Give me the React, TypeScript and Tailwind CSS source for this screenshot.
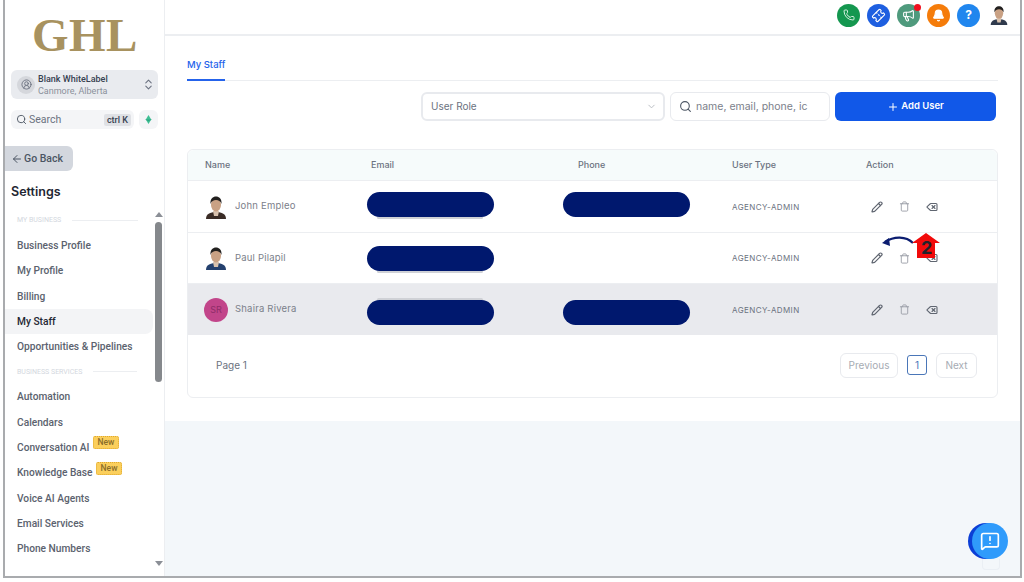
import { ArrowLeft, Bell, ChevronDown, ChevronsUpDown, CircleUserRound, Delete, Megaphone, MessageSquareWarning, Pencil, Phone, Plus, Search, Ticket, Trash } from "lucide-react";

const business = ["Business Profile", "My Profile", "Billing", "My Staff", "Opportunities & Pipelines"];
const services = [
  { name: "Automation" },
  { name: "Calendars" },
  { name: "Conversation AI", isNew: true },
  { name: "Knowledge Base", isNew: true },
  { name: "Voice AI Agents" },
  { name: "Email Services" },
  { name: "Phone Numbers" },
];

function Portrait({ shirt, size }: { shirt: string; size: string }) {
  return (
    <svg viewBox="0 0 24 24" className={size}>
      <path d="M2 24c0-5 4-7 10-7s10 2 10 7z" fill={shirt} />
      <path d="M9 16h6l-1 5h-4z" fill="#d9c2ae" />
      <ellipse cx="12" cy="10" rx="5" ry="6.5" fill="#c9a184" />
      <path d="M6.500 9C6 3.500 9 1.500 12 1.500S18 3.500 17.500 9c-1-3-3-4-5.500-4S7.500 6 6.500 9z" fill="#22201f" />
    </svg>
  );
}

function NavItem({ name, active, isNew }: { name: string; active?: boolean; isNew?: boolean }) {
  return (
    <div className={`flex h-[25.3px] w-[148px] items-center rounded-r-lg pl-[12px] text-[10.2px] font-medium ${active ? "bg-[#f3f4f6] text-[#1f2733]" : "text-[#5b626e]"}`}>
      <span className="whitespace-nowrap">{name}</span>
      {isNew && (
        <span className="mb-[10px] ml-[3px] rounded-[2px] border border-dotted border-[#e0a92e] bg-[#fbcf5c] px-[4px] text-[8.5px] leading-[11px] text-[#8a6d2a]">New</span>
      )}
    </div>
  );
}

function SectionLabel({ label, line }: { label: string; line: string }) {
  return (
    <div className="flex h-[25px] items-center pl-[12px]">
      <span className="whitespace-nowrap text-[7px] text-[#d3d7de]">{label}</span>
      <span className={`ml-[11px] h-px bg-[#eceef1] ${line}`} />
    </div>
  );
}

function Sidebar() {
  return (
    <aside className="relative flex h-full w-[159px] shrink-0 flex-col bg-white font-['Roboto',sans-serif]">
      <div className="h-[70px] pl-[27px] pt-[10px] font-['Liberation_Serif',serif] text-[47px] font-bold leading-[50px] tracking-[0.5px] text-[#a8925f]">GHL</div>
      <div className="ml-[6px] flex h-[29px] w-[147px] items-center rounded-md bg-[#e9ebef] pl-[6px] pr-[3px]">
        <span className="flex h-[18px] w-[18px] items-center justify-center rounded-full bg-[#d5d7dc]">
          <CircleUserRound size={11} className="text-[#6b7280]" />
        </span>
        <div className="ml-[3px] flex-1 text-[9px] leading-[12px]">
          <div className="font-medium text-[#374151]">Blank WhiteLabel</div>
          <div className="text-[#8b919b]">Canmore, Alberta</div>
        </div>
        <ChevronsUpDown size={13} className="text-[#6b7280]" />
      </div>
      <div className="ml-[6px] mt-[11px] flex h-[19px] items-center gap-[5px]">
        <div className="flex h-full w-[123px] items-center rounded-md bg-[#f4f5f7] pl-[5px] pr-[3px] text-[10.5px] text-[#6b7280]">
          <Search size={11} className="mr-[2px] text-[#4b5563]" />
          <span className="flex-1">Search</span>
          <span className="rounded-[2px] bg-[#dfe1e5] px-[3px] text-[9px] font-medium leading-[12px] text-[#374151]">ctrl K</span>
        </div>
        <div className="flex h-full w-[19px] items-center justify-center rounded-md bg-[#f4f5f7]">
          <svg viewBox="0 0 10 10" className="h-[9px] w-[9px]">
            <path d="M5 0l3 5-3 5-3-5z" fill="#3fbf94" />
            <path d="M1 5h8L5 7z" fill="#2aa57f" />
          </svg>
        </div>
      </div>
      <div className="mt-[17px] flex h-[25px] w-[68px] items-center gap-[1px] rounded-r-md bg-[#d3d7de] pl-[6px] text-[10.5px] font-medium text-[#4b5563]">
        <ArrowLeft size={12} />
        Go Back
      </div>
      <div className="ml-[6px] mt-[12px] font-['Inter',sans-serif] text-[12.5px] font-semibold leading-[18px] text-[#1f2733]">Settings</div>
      <div className="mt-[7px] h-[357px] overflow-hidden">
        <SectionLabel label="MY BUSINESS" line="w-[66px]" />
        {business.map((name) => (
          <NavItem key={name} name={name} active={name === "My Staff"} />
        ))}
        <SectionLabel label="BUSINESS SERVICES" line="w-[44px]" />
        {services.map((item) => (
          <NavItem key={item.name} name={item.name} isNew={item.isNew} />
        ))}
        <div className="ml-[21px] mt-[9px] h-px w-[3px] bg-[#9a9ea6]" />
      </div>
      {/* scrollbar */}
      <span className="absolute left-[150px] top-[212px] h-0 w-0 border-x-[4px] border-b-[5px] border-x-transparent border-b-[#8b8f96]" />
      <span className="absolute left-[150px] top-[222px] h-[160px] w-[7px] rounded-full bg-[#85888c]" />
      <span className="absolute left-[150px] top-[561px] h-0 w-0 border-x-[4px] border-t-[5px] border-x-transparent border-t-[#8b8f96]" />
    </aside>
  );
}

function TopBar() {
  return (
    <header className="flex h-[36px] shrink-0 items-center justify-end border-b-2 border-[#eceef1] bg-white pb-[4px] pr-[11px]">
      <div className="flex items-center gap-[7px]">
        <span className="flex h-[23px] w-[23px] items-center justify-center rounded-full bg-[#14974f]">
          <Phone size={12} className="text-[#d5f0df]" />
        </span>
        <span className="flex h-[23px] w-[23px] items-center justify-center rounded-full bg-[#1e5fe0]">
          <Ticket size={13} className="-rotate-45 text-white" />
        </span>
        <span className="relative flex h-[23px] w-[23px] items-center justify-center rounded-full bg-[#4f9a7d]">
          <Megaphone size={13} className="text-white" />
          <span className="absolute -right-px top-0 h-[7px] w-[7px] rounded-full bg-[#f0101f]" />
        </span>
        <span className="flex h-[23px] w-[23px] items-center justify-center rounded-full bg-[#f57c0a]">
          <Bell size={13} className="fill-white text-white" />
        </span>
        <span className="flex h-[23px] w-[23px] items-center justify-center rounded-full bg-[#2086ee] text-[12px] font-bold text-white">?</span>
        <span className="ml-[2px]">
          <Portrait shirt="#2f3a4c" size="h-[20px] w-[20px]" />
        </span>
      </div>
    </header>
  );
}

function Pill() {
  return <span className="absolute left-0 top-0 h-[25px] w-[127px] rounded-full bg-[#00186e]" />;
}

function Row({ name, avatar, hasPhone, gray, pillTop, peek }: { name: string; avatar: React.ReactNode; hasPhone: boolean; gray?: boolean; pillTop: string; peek: string }) {
  return (
    <div className={`grid h-[51.500px] grid-cols-[179px_207px_154px_134px_1fr] items-center border-t border-[#eceef1] ${gray ? "bg-[#e9eaee]" : ""}`}>
      <div className="flex items-center gap-[7px] pl-[16px]">
        <span className="flex w-[24px] justify-center">{avatar}</span>
        <span className="text-[9.5px] tracking-[0.2px] text-[#7b808a]">{name}</span>
      </div>
      <div className="relative h-[51px]">
        <span className={`absolute left-[10px] h-[3px] w-[106px] rounded-sm bg-[#cfd1d6] ${peek}`} />
        <div className={`absolute left-0 h-[25px] w-[127px] ${pillTop}`}>
          <Pill />
        </div>
      </div>
      <div className="relative h-[51px]">
        {hasPhone && (
          <div className={`absolute -left-[11px] h-[25px] w-[127px] ${pillTop}`}>
            <Pill />
          </div>
        )}
      </div>
      <div className="pl-[4px] text-[8px] tracking-[0.4px] text-[#6b7280]">AGENCY-ADMIN</div>
      <div className="flex items-center gap-[16px] pl-[9px]">
        <Pencil size={12} strokeWidth={2.4} className="text-[#5f6570]" />
        <Trash size={11} strokeWidth={2} className="text-[#9a9ea6]" />
        <Delete size={12} strokeWidth={2.2} className="text-[#5f6570]" />
      </div>
    </div>
  );
}

function StaffTable() {
  return (
    <div className="relative ml-[22px] mt-[28px] h-[249px] w-[811px] rounded-md border border-[#eceef1]">
      <div className="grid h-[30px] grid-cols-[166px_207px_154px_134px_1fr] items-center rounded-t-md bg-[#f6fbfb] pl-[17px] text-[9px] font-medium text-[#6b7280]">
        <span>Name</span>
        <span>Email</span>
        <span>Phone</span>
        <span>User Type</span>
        <span>Action</span>
      </div>
      <Row name="John Empleo" avatar={<Portrait shirt="#3a2c26" size="h-[24px] w-[24px]" />} hasPhone pillTop="top-[11px]" peek="top-[35px]" />
      <Row name="Paul Pilapil" avatar={<Portrait shirt="#24406e" size="h-[24px] w-[24px]" />} hasPhone={false} pillTop="top-[13px]" peek="top-[37px]" />
      <Row
        name="Shaira Rivera"
        gray
        hasPhone
        pillTop="top-[16px]"
        peek="top-[14px]"
        avatar={
          <span className="flex h-[24px] w-[24px] items-center justify-center rounded-full bg-[#c2458a] text-[9px] text-[#8f2d68]">SR</span>
        }
      />
      <div className="flex items-center border-t border-transparent pl-[28px] pr-[20px] pt-[17px] text-[10px] text-[#6b7280]">
        <span className="flex-1">Page 1</span>
        <span className="flex h-[25px] w-[58px] items-center justify-center rounded-md border border-[#e8eaee] text-[#a6abb3]">Previous</span>
        <span className="ml-[9px] flex h-[20px] w-[20px] items-center justify-center rounded-[3px] border border-[#4a76b8] text-[#4a76b8]">1</span>
        <span className="ml-[9px] flex h-[25px] w-[41px] items-center justify-center rounded-md border border-[#e8eaee] text-[#a6abb3]">Next</span>
      </div>
      {/* step marker drawn over the action column */}
      <svg viewBox="0 0 60 26" className="absolute left-[694px] top-[83px] h-[26px] w-[60px]">
        <path d="M31 10C24 3 12 3 3 9" fill="none" stroke="#0b1d70" strokeWidth="2.4" />
        <path d="M0 10l7-5 1 8z" fill="#0b1d70" />
        <path d="M44 0l14 10h-5v15H35V10h-5z" fill="#f10a0a" />
      </svg>
      <span className="absolute left-[733px] top-[87px] text-[18px] font-bold leading-[22px] text-[#20222a]">2</span>
    </div>
  );
}

export default function App() {
  return (
    <div className="h-[582px] w-[1024px] overflow-hidden bg-white font-['Inter',sans-serif]">
      <div className="relative ml-[3px] flex h-[578px] w-[1019px] border-x-2 border-b-2 border-[#a9abae]">
        <Sidebar />
        <main className="flex min-w-0 flex-1 flex-col border-l border-[#eceef1] bg-[#f3f7fa]">
          <TopBar />
          <div className="h-[385px] bg-white">
            <div className="ml-[22px] mr-[22px] mt-[21px] h-[24px] border-b border-[#eceef1]">
              <div className="h-[24px] w-[38px] border-b-2 border-[#2563eb] text-[9.5px] font-medium leading-[16px] text-[#2563eb]">My&nbsp;Staff</div>
            </div>
            <div className="ml-[256px] mt-[11px] flex items-center">
              <div className="flex h-[29px] w-[244px] items-center justify-between rounded-md border-2 border-[#e8eaee] pl-[8px] pr-[6px] text-[10px] text-[#6b7280]">
                User Role
                <ChevronDown size={11} className="text-[#b5b9c0]" />
              </div>
              <div className="ml-[5px] flex h-[29px] w-[160px] items-center overflow-hidden whitespace-nowrap rounded-md border border-[#e8eaee] pl-[8px] text-[10.5px] text-[#7b808a]">
                <Search size={13} className="mr-[4px] shrink-0 text-[#4b5563]" />
                name, email, phone, ic
              </div>
              <div className="ml-[5px] flex h-[29px] w-[161px] items-center justify-center gap-[2px] rounded-md bg-[#1158e8] text-[9.5px] font-semibold text-white">
                <Plus size={12} />
                Add User
              </div>
            </div>
            <StaffTable />
          </div>
          <div className="flex-1" />
        </main>
        {/* floating chat button */}
        <span className="absolute left-[963px] top-[523px] h-[36px] w-[36px] rounded-full bg-[#0b3fd6]" />
        <span className="absolute left-[967px] top-[523px] flex h-[36px] w-[36px] items-center justify-center rounded-full bg-[#2f9bfb]">
          <MessageSquareWarning size={20} className="text-white" />
        </span>
        <span className="absolute left-[977px] top-[559px] h-[11px] w-[18px] rounded-b-[4px] border border-t-0 border-[#eaeff4]" />
      </div>
    </div>
  );
}
